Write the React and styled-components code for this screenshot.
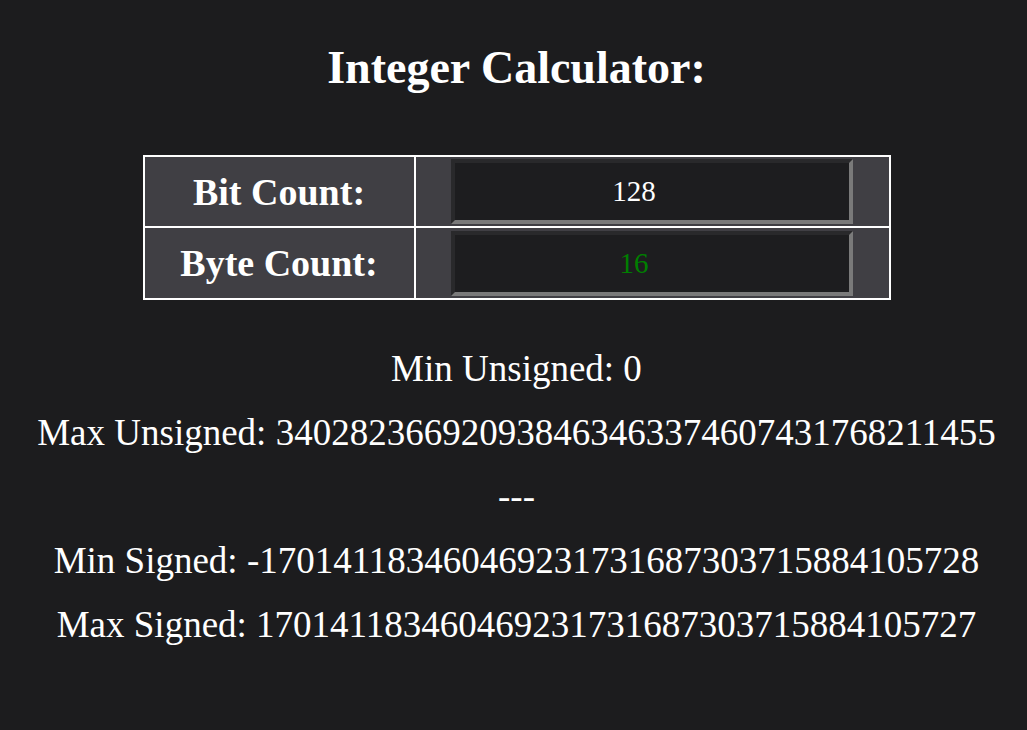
import styled, { createGlobalStyle } from "styled-components"

const Global = createGlobalStyle`
  html, body {
    margin: 0;
    background: #1c1c1e;
  }
  body {
    font-family: "Liberation Serif", "Times New Roman", serif;
    color: #ffffff;
  }
`

const Page = styled.div`
  min-height: 730px;
  padding: 45px 0 0 6px;
  box-sizing: border-box;
  display: flex;
  flex-direction: column;
  align-items: center;
`

const Title = styled.h1`
  margin: 0;
  font-size: 46px;
  line-height: 46px;
  font-weight: bold;
`

const Table = styled.div`
  margin-top: 64px;
  display: grid;
  grid-template-columns: 269px 473px;
  grid-template-rows: 69px 70px;
  gap: 2px;
  border: 2px solid #ffffff;
  background: #ffffff;
`

const Label = styled.div`
  background: #403f44;
  display: flex;
  align-items: center;
  justify-content: center;
  font-size: 38px;
  font-weight: bold;
`

const Cell = styled.div`
  background: #403f44;
  display: flex;
  align-items: center;
  justify-content: center;
`

const Field = styled.input`
  width: 402px;
  height: 65px;
  box-sizing: border-box;
  margin: 0;
  padding: 0 36px 0 0;
  background: #1d1d1f;
  border-style: solid;
  border-width: 4px;
  border-color: #29292b #7a7a7a #7a7a7a #29292b;
  font-family: "Liberation Serif", "Times New Roman", serif;
  font-size: 29px;
  text-align: center;
  color: ${({ $tone }) => $tone || "#ffffff"};
  outline: none;
`

const Results = styled.div`
  margin-top: 37px;
  display: flex;
  flex-direction: column;
  align-items: center;
`

const Line = styled.p`
  margin: 0;
  font-size: 37px;
  line-height: 64px;
  white-space: nowrap;
`

const bits = 128n
const maxUnsigned = (1n << bits) - 1n
const minSigned = -(1n << (bits - 1n))
const maxSigned = (1n << (bits - 1n)) - 1n

export default function App() {
  return (
    <>
      <Global />
      <Page>
        <Title>Integer Calculator:</Title>
        <Table>
          <Label>Bit Count:</Label>
          <Cell>
            <Field type="text" defaultValue="128" />
          </Cell>
          <Label>Byte Count:</Label>
          <Cell>
            <Field type="text" value="16" readOnly $tone="#008000" />
          </Cell>
        </Table>
        <Results>
          <Line>Min Unsigned: 0</Line>
          <Line>Max Unsigned: {maxUnsigned.toString()}</Line>
          <Line>---</Line>
          <Line>Min Signed: {minSigned.toString()}</Line>
          <Line>Max Signed: {maxSigned.toString()}</Line>
        </Results>
      </Page>
    </>
  )
}
